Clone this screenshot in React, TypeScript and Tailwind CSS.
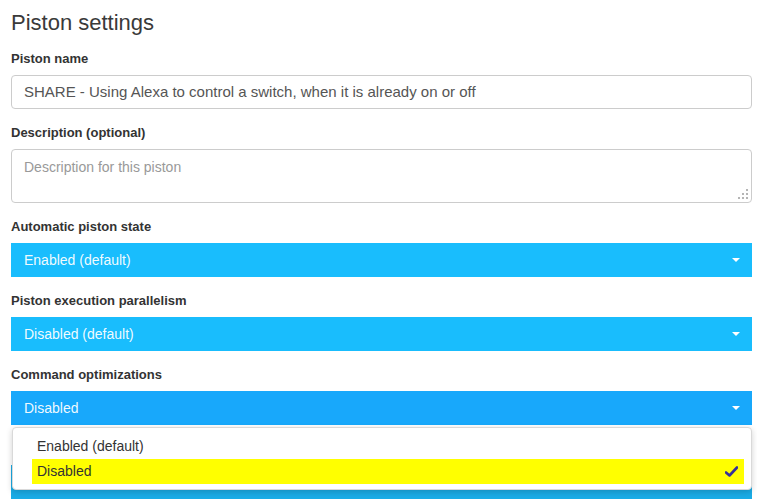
const FONT = { fontFamily: '"Liberation Sans", Arial, sans-serif' };

function Label({ children }: { children?: React.ReactNode }) {
  return (
    <div className="mb-[7px] h-[18px] text-[13px] font-bold leading-[18px] text-[#333]">
      {children}
    </div>
  );
}

function Caret() {
  return (
    <span className="h-0 w-0 border-x-[4px] border-t-[4px] border-x-transparent border-t-white" />
  );
}

function BlueSelect({ value, color }: { value: string; color: string }) {
  return (
    <div
      className={`flex h-[34px] items-center justify-between pl-[13px] pr-[12px] text-[14px] text-white/95 ${color}`}
    >
      <span>{value}</span>
      <Caret />
    </div>
  );
}

function Grip() {
  const dots = [
    [8, 0],
    [4, 4],
    [8, 4],
    [0, 8],
    [4, 8],
    [8, 8],
  ];
  return (
    <svg width="10" height="10" viewBox="0 0 10 10" className="absolute bottom-[3px] right-[3px]">
      {dots.map(([x, y]) => (
        <rect key={`${x}-${y}`} x={x} y={y} width="2" height="2" fill="#b5b5b5" />
      ))}
    </svg>
  );
}

export default function App() {
  return (
    <div style={FONT} className="h-[502px] w-[757px] overflow-hidden bg-white pl-[11px] pr-[5px] text-[#333]">
      {/* heading */}
      <h2 className="pt-[10px] pb-[14px] text-[22px] leading-[26px] text-[#3a3a3a]">Piston settings</h2>

      <div className="mb-[15px]">
        <Label>Piston name</Label>
        <div className="flex h-[34px] items-center rounded-[4px] border border-[#ccc] px-[12px] text-[15px] text-[#555]">
          SHARE - Using Alexa to control a switch, when it is already on or off
        </div>
      </div>

      <div className="mb-[15px]">
        <Label>Description (optional)</Label>
        <div className="relative h-[54px] rounded-[4px] border border-[#ccc] px-[12px] pt-[8px] text-[14px] leading-[18px] text-[#999]">
          Description for this piston
          <Grip />
        </div>
      </div>

      <div className="mb-[15px]">
        <Label>Automatic piston state</Label>
        <BlueSelect value="Enabled (default)" color="bg-[#19bdfd]" />
      </div>

      <div className="mb-[15px]">
        <Label>Piston execution parallelism</Label>
        <BlueSelect value="Disabled (default)" color="bg-[#19bdfd]" />
      </div>

      <div className="relative mb-[15px]">
        <Label>Command optimizations</Label>
        <BlueSelect value="Disabled" color="bg-[#18a8fb]" />

        {/* open dropdown */}
        <div className="absolute left-[1px] right-0 top-[61px] z-10 rounded-[4px] border border-[#d9d9d9] bg-white py-[5px] pl-[19px] pr-[7px] text-[14px] text-[#333] shadow-[0_2px_6px_rgba(0,0,0,0.18)]">
          <div className="flex h-[26px] items-center pl-[5px]">Enabled (default)</div>
          <div className="flex h-[25px] items-center justify-between bg-[#ffff00] pl-[5px] pr-[6px]">
            <span>Disabled</span>
            <svg width="13" height="11" viewBox="0 0 13 11">
              <path d="M1 6.5 L4.5 9.5 L12 1.5" fill="none" stroke="#35309a" strokeWidth="2.6" strokeLinecap="round" strokeLinejoin="round" />
            </svg>
          </div>
        </div>
      </div>

      {/* next setting, hidden under the open menu */}
      <div>
        <Label />
        <BlueSelect value="" color="bg-[#1aace6]" />
      </div>
    </div>
  );
}
